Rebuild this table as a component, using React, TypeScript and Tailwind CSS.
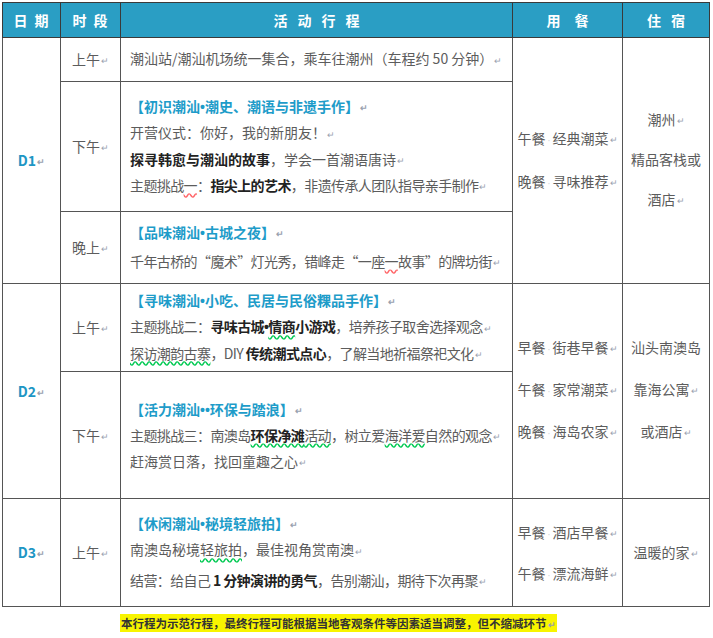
import React from "react";

const Mark = () => (
  <span className="text-[9px] text-gray-400 ml-px align-middle">↵</span>
);

// faint space marker between meal name and dish
const Dot = () => (
  <span
    className="inline-block w-[7px] text-center text-[10px] text-gray-300"
    style={{ fontFamily: '"Liberation Sans", sans-serif' }}
  >
    ·
  </span>
);

// narrow latin bullet between words
const Bul = () => (
  <span style={{ fontFamily: '"Liberation Sans", sans-serif' }}>•</span>
);

const Heading = ({ children }: { children: React.ReactNode }) => (
  <div className="text-[#1e9cc9] font-bold leading-[24px] whitespace-nowrap">
    {children}
    <Mark />
  </div>
);

const Line = ({
  children,
  tight = false,
}: {
  children: React.ReactNode;
  tight?: boolean;
}) => (
  <div
    className={
      tight
        ? "leading-[24px] whitespace-nowrap tracking-[-0.6px]"
        : "leading-[24px] whitespace-nowrap"
    }
  >
    {children}
    <Mark />
  </div>
);

const B = ({ children }: { children: React.ReactNode }) => (
  <strong className="font-bold text-[#222]">{children}</strong>
);

const Wavy = ({
  children,
  color = "decoration-red-400",
}: {
  children: React.ReactNode;
  color?: string;
}) => (
  <span className={`underline decoration-wavy underline-offset-2 ${color}`}>
    {children}
  </span>
);

const Time = ({ children }: { children: React.ReactNode }) => (
  <td className="border border-[#555] text-center align-middle whitespace-nowrap">
    {children}
    <Mark />
  </td>
);

const Day = ({ children }: { children: React.ReactNode }) => (
  <span className="font-bold text-[#1e96c4] whitespace-nowrap">
    {children}
    <Mark />
  </span>
);

const Meal = ({ a, b }: { a: string; b: string }) => (
  <div className="whitespace-nowrap">
    {a}
    <Dot />
    {b}
    <Mark />
  </div>
);

const App = () => {
  return (
    <div
      className="w-[713px] h-[638px] bg-white pt-[2px] pl-[2px] text-[14px] text-[#5c5c5c]"
      style={{ fontFamily: '"Noto Sans CJK SC", "Noto Sans", sans-serif' }}
    >
      <table className="table-fixed border-collapse w-[707px] border border-[#444]">
        <colgroup>
          <col className="w-[58px]" />
          <col className="w-[60px]" />
          <col className="w-[392px]" />
          <col className="w-[110px]" />
          <col className="w-[87px]" />
        </colgroup>
        <thead>
          <tr className="h-[35px] bg-[#2a9ec4] text-white font-bold text-[14px]">
            <th className="border border-[#3a3a3a] tracking-[7px] pl-[6px]">日期</th>
            <th className="border border-[#3a3a3a] tracking-[7px] pl-[6px]">时段</th>
            <th className="border border-[#3a3a3a] tracking-[10px] pl-[10px]">活动行程</th>
            <th className="border border-[#3a3a3a] tracking-[14px] pl-[14px]">用餐</th>
            <th className="border border-[#3a3a3a] tracking-[10px] pl-[10px]">住宿</th>
          </tr>
        </thead>
        <tbody>
          {/* D1 */}
          <tr className="h-[44px]">
            <td rowSpan={3} className="border border-[#555] text-center">
              <Day>D1</Day>
            </td>
            <Time>上午</Time>
            <td className="border border-[#555] px-[9px]">
              <Line>潮汕站/潮汕机场统一集合，乘车往潮州（车程约 50 分钟）</Line>
            </td>
            <td rowSpan={3} className="border border-[#555] text-center">
              <div className="flex flex-col gap-[22px] pb-[2px]">
                <Meal a="午餐" b="经典潮菜" />
                <Meal a="晚餐" b="寻味推荐" />
              </div>
            </td>
            <td rowSpan={3} className="border border-[#555] text-center">
              <div className="flex flex-col gap-[19px] pb-[2px]">
                <div className="whitespace-nowrap">
                  潮州<Mark />
                </div>
                <div className="whitespace-nowrap">精品客栈或</div>
                <div className="whitespace-nowrap">
                  酒店<Mark />
                </div>
              </div>
            </td>
          </tr>
          <tr className="h-[130px]">
            <Time>下午</Time>
            <td className="border border-[#555] px-[9px]">
              <Heading>
                【初识潮汕<Bul />潮史、潮语与非遗手作】
              </Heading>
              <Line>开营仪式：你好，我的新朋友！</Line>
              <Line>
                <B>探寻韩愈与潮汕的故事</B>，学会一首潮语唐诗
              </Line>
              <Line tight>
                主题挑战<Wavy>一</Wavy>：<B>指尖上的艺术</B>，非遗传承人团队指导亲手制作
              </Line>
            </td>
          </tr>
          <tr className="h-[72px]">
            <Time>晚上</Time>
            <td className="border border-[#555] px-[9px]">
              <div className="flex flex-col gap-[3px]">
                <Heading>
                  【品味潮汕<Bul />古城之夜】
                </Heading>
                <Line tight>
                  千年古桥的“魔术”灯光秀，错峰走“一座<Wavy>一</Wavy>故事”的牌坊街
                </Line>
              </div>
            </td>
          </tr>

          {/* D2 */}
          <tr className="h-[88px]">
            <td rowSpan={2} className="border border-[#555] text-center">
              <Day>D2</Day>
            </td>
            <Time>上午</Time>
            <td className="border border-[#555] px-[9px]">
              <Heading>
                【寻味潮汕<Bul />小吃、民居与民俗粿品手作】
              </Heading>
              <Line tight>
                主题挑战二：
                <B>
                  寻味古城<Bul />
                  <Wavy color="decoration-green-500">情商</Wavy>小游戏
                </B>
                ，培养孩子取舍选择观念
              </Line>
              <Line tight>
                <Wavy color="decoration-green-500">探访潮韵古寨</Wavy>，DIY <B>传统潮式点心</B>，了解当地祈福祭祀文化
              </Line>
            </td>
            <td rowSpan={2} className="border border-[#555] text-center">
              <div className="flex flex-col gap-[21px] pb-[4px]">
                <Meal a="早餐" b="街巷早餐" />
                <Meal a="午餐" b="家常潮菜" />
                <Meal a="晚餐" b="海岛农家" />
              </div>
            </td>
            <td rowSpan={2} className="border border-[#555] text-center">
              <div className="flex flex-col gap-[21px] pb-[4px]">
                <div className="whitespace-nowrap">汕头南澳岛</div>
                <div className="whitespace-nowrap">
                  靠海公寓<Mark />
                </div>
                <div className="whitespace-nowrap">
                  或酒店<Mark />
                </div>
              </div>
            </td>
          </tr>
          <tr className="h-[127px]">
            <Time>下午</Time>
            <td className="border border-[#555] px-[9px]">
              <div className="pt-[2px]">
                <Heading>
                  【活力潮汕<Bul />
                  <Bul />环保与踏浪】
                </Heading>
                <Line tight>
                  主题挑战三：南澳岛
                  <Wavy color="decoration-green-500">
                    <B>环保净滩</B>活动
                  </Wavy>
                  ，树立爱<Wavy color="decoration-green-500">海洋爱</Wavy>自然的观念
                </Line>
                <Line>赶海赏日落，找回童趣之心</Line>
              </div>
            </td>
          </tr>

          {/* D3 */}
          <tr className="h-[108px]">
            <td className="border border-[#555] text-center">
              <Day>D3</Day>
            </td>
            <Time>上午</Time>
            <td className="border border-[#555] px-[9px]">
              <Heading>
                【休闲潮汕<Bul />秘境轻旅拍】
              </Heading>
              <Line>
                南澳岛秘境<Wavy color="decoration-green-500">轻旅拍</Wavy>，最佳视角赏南澳
              </Line>
              <div className="mt-[4px]">
                <Line tight>
                  结营：给自己 <B>1 分钟演讲的勇气</B>，告别潮汕，期待下次再聚
                </Line>
              </div>
            </td>
            <td className="border border-[#555] text-center">
              <div className="flex flex-col gap-[20px]">
                <Meal a="早餐" b="酒店早餐" />
                <Meal a="午餐" b="漂流海鲜" />
              </div>
            </td>
            <td className="border border-[#555] text-center whitespace-nowrap">
              温暖的家<Mark />
            </td>
          </tr>
        </tbody>
      </table>

      <div className="pl-[118px] pt-[5px]">
        <span className="bg-[#f8f400] text-[11.5px] font-bold text-[#333] leading-[17px] px-[1px] py-[1px] whitespace-nowrap">
          本行程为示范行程，最终行程可能根据当地客观条件等因素适当调整，但不缩减环节
          <Mark />
        </span>
      </div>
    </div>
  );
};

export default App;
